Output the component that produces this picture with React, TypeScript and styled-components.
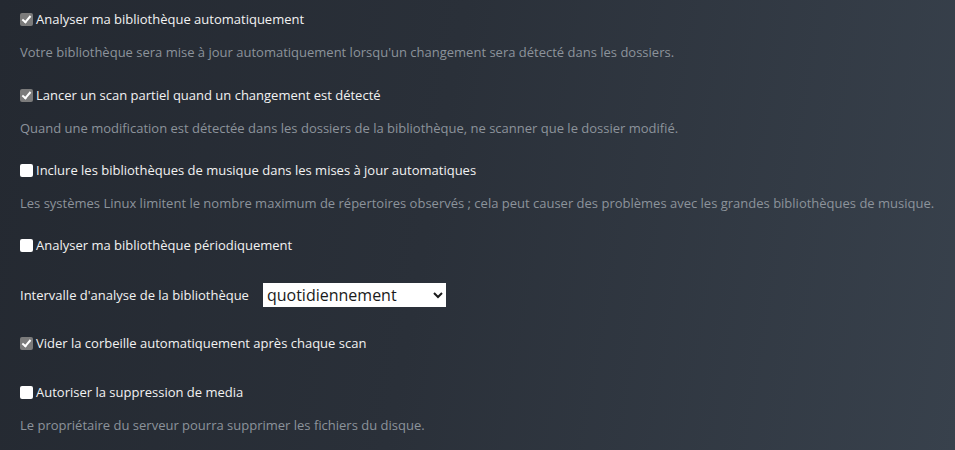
import styled, { createGlobalStyle } from 'styled-components'

const GlobalStyle = createGlobalStyle`
  html, body {
    margin: 0;
    padding: 0;
    height: 100%;
  }
  body {
    font-family: "Open Sans", "Noto Sans", sans-serif;
    background: linear-gradient(100deg, #242931 0%, #2a3039 45%, #38414c 100%);
    color: #e8e8e8;
    overflow: hidden;
  }
`

const FIELDS = [
  {
    label: 'Analyser ma bibliothèque automatiquement',
    checked: true,
    description: "Votre bibliothèque sera mise à jour automatiquement lorsqu'un changement sera détecté dans les dossiers.",
    after: 23,
  },
  {
    label: 'Lancer un scan partiel quand un changement est détecté',
    checked: true,
    description: 'Quand une modification est détectée dans les dossiers de la bibliothèque, ne scanner que le dossier modifié.',
    after: 22,
  },
  {
    label: 'Inclure les bibliothèques de musique dans les mises à jour automatiques',
    checked: false,
    description:
      'Les systèmes Linux limitent le nombre maximum de répertoires observés ; cela peut causer des problèmes avec les grandes bibliothèques de musique.',
    after: 22,
  },
  {
    label: 'Analyser ma bibliothèque périodiquement',
    checked: false,
    after: 28,
  },
]

const FIELDS_BOTTOM = [
  { label: 'Vider la corbeille automatiquement après chaque scan', checked: true, after: 29 },
  {
    label: 'Autoriser la suppression de media',
    checked: false,
    description: 'Le propriétaire du serveur pourra supprimer les fichiers du disque.',
    after: 0,
  },
]

type FieldProps = { label: string; checked: boolean; description?: string; after: number }

const CheckField = ({ label, checked, description, after }: FieldProps) => (
  <FIELD $after={after}>
    <CHECK_LABEL>
      <CHECKBOX type="checkbox" defaultChecked={checked} />
      <span>{label}</span>
    </CHECK_LABEL>
    {description && <DESCRIPTION>{description}</DESCRIPTION>}
  </FIELD>
)

const App = () => {
  return (
    <>
      <GlobalStyle />
      <PAGE>
        {FIELDS.map((f) => (
          <CheckField key={f.label} {...f} />
        ))}
        <SELECT_ROW>
          <label htmlFor="interval">Intervalle d&apos;analyse de la bibliothèque</label>
          <SELECT id="interval" defaultValue="daily">
            <option value="daily">quotidiennement</option>
            <option value="weekly">hebdomadairement</option>
          </SELECT>
        </SELECT_ROW>
        {FIELDS_BOTTOM.map((f) => (
          <CheckField key={f.label} {...f} />
        ))}
      </PAGE>
    </>
  )
}

export default App

const PAGE = styled.main`
  padding: 9px 20px 0 20px;
  font-size: 13px;
`

const FIELD = styled.section<{ $after: number }>`
  margin-bottom: ${({ $after }) => $after}px;
`

const CHECK_LABEL = styled.label`
  display: flex;
  align-items: center;
  height: 20px;
  color: #f2f2f2;
  span {
    margin-left: 3px;
  }
`

const CHECKBOX = styled.input`
  appearance: none;
  margin: 0;
  width: 13px;
  height: 13px;
  border-radius: 2px;
  background: #ffffff;
  position: relative;
  flex-shrink: 0;
  &:checked {
    background: #7b7b7b;
  }
  &:checked::after {
    content: '';
    position: absolute;
    left: 4px;
    top: 1px;
    width: 3px;
    height: 7px;
    border: solid #ffffff;
    border-width: 0 2px 2px 0;
    transform: rotate(40deg);
  }
`

const DESCRIPTION = styled.p`
  margin: 13px 0 0 0;
  line-height: 20px;
  color: #8c939b;
`

const SELECT_ROW = styled.div`
  display: flex;
  align-items: center;
  height: 24px;
  margin-bottom: 26px;
  color: #f2f2f2;
  label {
    margin-right: 14px;
  }
`

const SELECT = styled.select`
  width: 183px;
  height: 24px;
  border: none;
  border-radius: 0;
  background: #ffffff;
  color: #1a1a1a;
  font-family: "Open Sans", sans-serif;
  font-size: 16px;
  padding: 0;
`
